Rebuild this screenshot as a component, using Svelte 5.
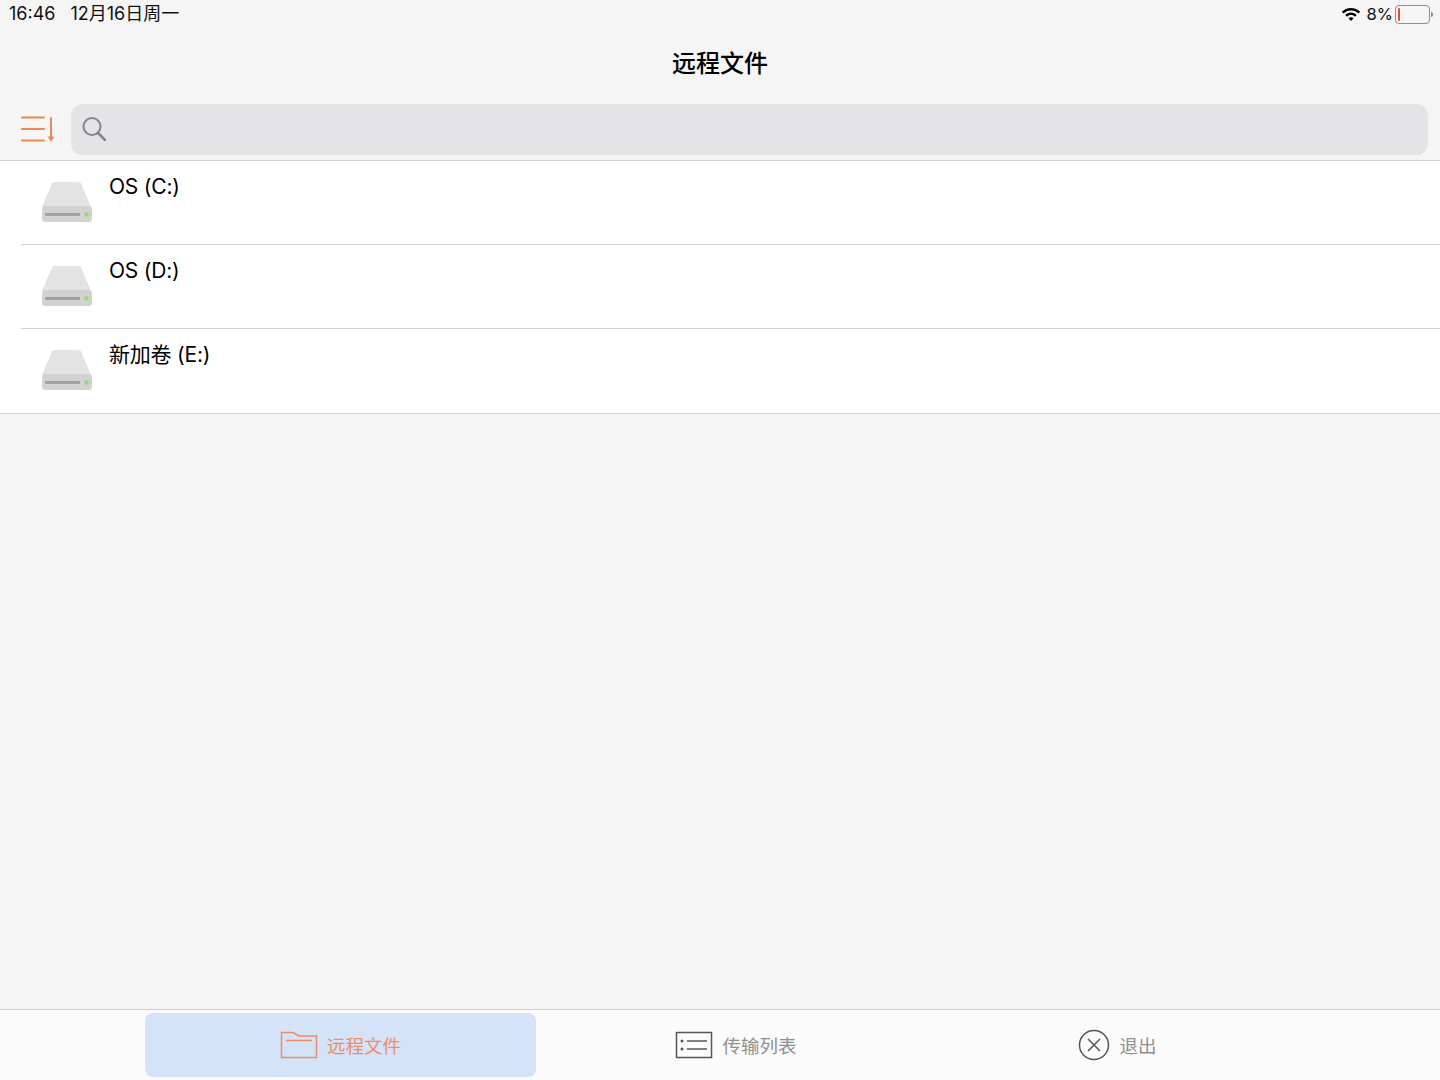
<script>
	const drives = ['OS (C:)', 'OS (D:)', '新加卷 (E:)'];
</script>

<div class="page">
	<header class="status-bar">
		<div class="status-left">
			<span>16:46</span>
			<span>12月16日周一</span>
		</div>
		<div class="status-right">
			<svg class="wifi" width="20" height="15" viewBox="0 0 20 15">
				<path d="M10 1C6.400 1 3.200 2.400.8 4.700l1.700 1.800C4.500 4.600 7.100 3.500 10 3.500s5.500 1.100 7.500 3l1.700-1.800C16.800 2.400 13.600 1 10 1z" />
				<path d="M10 5.600c-2.200 0-4.200.9-5.700 2.300l1.700 1.800C7 8.700 8.400 8.100 10 8.100s3 .6 4 1.600l1.700-1.800C14.200 6.500 12.200 5.600 10 5.600z" />
				<path d="M10 10.200c-1 0-1.900.4-2.500 1l2.500 2.700 2.500-2.700c-.6-.6-1.500-1-2.500-1z" />
			</svg>
			<span class="percent">8%</span>
			<div class="battery">
				<div class="battery-level"></div>
			</div>
			<div class="battery-cap"></div>
		</div>
	</header>

	<div class="title">远程文件</div>

	<div class="toolbar">
		<svg class="sort" width="36" height="26" viewBox="0 0 36 26" fill="none" stroke="#ea8a4e" stroke-width="2" stroke-linecap="round">
			<path d="M2 1.500h22M2 13h22M2 24.500h22M31 2v20" />
			<path d="M27.500 20.500h7l-3.500 5z" fill="#ea8a4e" stroke="none" />
		</svg>
		<div class="search">
			<svg width="24" height="24" viewBox="0 0 24 24" fill="none" stroke="#86868a" stroke-width="2">
				<circle cx="10" cy="9.500" r="8.500" />
				<path d="M16 16l7 7" stroke-width="2.600" stroke-linecap="round" />
			</svg>
		</div>
	</div>

	<ul class="list">
		{#each drives as drive}
			<li class="row">
				<svg class="drive" width="52" height="42" viewBox="0 0 52 42">
					<path d="M11 2.500Q11.500 1 13 1H38Q39.500 1 40 2.500L50 26H1z" fill="#e3e3e3" />
					<rect x="1" y="25" width="50" height="16" rx="3.500" fill="#d2d2d2" />
					<rect x="4" y="32" width="35" height="3" rx="1" fill="#a0a0a0" />
					<rect x="43.500" y="31.500" width="4" height="4" fill="#8ee06a" />
				</svg>
				<span class="name">{drive}</span>
			</li>
		{/each}
	</ul>

	<nav class="tabs">
		<div class="tab active">
			<svg width="38" height="28" viewBox="0 0 38 28" fill="none" stroke="#ea8f63" stroke-width="1.500">
				<path d="M1.500 1.500H13L19 5H36.500V26.500H1.500z" />
				<path d="M6 9.500H32" />
			</svg>
			<span>远程文件</span>
		</div>
		<div class="tab">
			<svg width="38" height="28" viewBox="0 0 38 28" fill="none" stroke="#555" stroke-width="1.500">
				<rect x="1.500" y="1.500" width="35" height="25" />
				<path d="M12 10H32M12 18H32" />
				<circle cx="7" cy="10" r="1.500" fill="#555" stroke="none" />
				<circle cx="7" cy="18" r="1.500" fill="#555" stroke="none" />
			</svg>
			<span>传输列表</span>
		</div>
		<div class="tab">
			<svg width="32" height="32" viewBox="0 0 32 32" fill="none" stroke="#555" stroke-width="1.500">
				<circle cx="16" cy="16" r="14.500" />
				<path d="M10 10L22 22M22 10L10 22" />
			</svg>
			<span>退出</span>
		</div>
	</nav>
</div>

<style>
	:global(body) {
		margin: 0;
		background: #f5f5f6;
	}

	.page {
		display: flex;
		flex-direction: column;
		height: 1080px;
		font-family: Inter, "Noto Sans CJK SC", sans-serif;
		color: #000;
		overflow: hidden;
	}

	.status-bar {
		display: flex;
		justify-content: space-between;
		align-items: center;
		height: 28px;
		padding: 0 7px 0 9px;
		font-size: 18px;
		line-height: 28px;
		color: #111;
	}

	.status-left {
		display: flex;
		align-items: baseline;
		gap: 15px;
	}

	.status-right {
		display: flex;
		align-items: center;
	}

	.percent {
		font-size: 16.500px;
	}

	.wifi {
		fill: #000;
		margin-right: 6px;
	}

	.battery {
		width: 29px;
		height: 13px;
		margin-left: 2px;
		padding: 2px;
		border: 1px solid #8e8e8e;
		border-radius: 4px;
		display: flex;
	}

	.battery-level {
		width: 2px;
		background: #e8453c;
		border-radius: 1px;
	}

	.battery-cap {
		width: 2px;
		height: 5px;
		margin-left: 1px;
		background: #8e8e8e;
		border-radius: 0 2px 2px 0;
	}

	.title {
		height: 71px;
		line-height: 71px;
		text-align: center;
		font-size: 24px;
		font-weight: 500;
	}

	.toolbar {
		display: flex;
		align-items: center;
		gap: 14.500px;
		height: 62px;
		padding: 5px 12px 5px 20px;
		border-bottom: 1px solid #d3d3d5;
		box-sizing: border-box;
	}

	.sort {
		flex: none;
		margin-bottom: 2px;
	}

	.search {
		flex: 1;
		display: flex;
		align-items: center;
		height: 51px;
		padding-left: 11px;
		background: #e4e4e7;
		border-radius: 12px;
	}

	.search svg {
		margin-bottom: 2px;
	}

	.list {
		margin: 0;
		padding: 0 0 0 21px;
		list-style: none;
		background: #fff;
		border-bottom: 1px solid #d3d3d5;
	}

	.row {
		display: flex;
		align-items: flex-start;
		height: 83px;
		padding-left: 20px;
		border-bottom: 1px solid #d3d3d5;
	}

	.row:last-child {
		border-bottom: 0;
		height: 84px;
	}

	.drive {
		margin-top: 20px;
		flex: none;
	}

	.name {
		margin: 13px 0 0 16px;
		font-size: 21px;
		line-height: 26px;
		letter-spacing: -0.2px;
	}

	.tabs {
		display: grid;
		grid-template-columns: 391px 400px 363px;
		height: 71px;
		margin-top: auto;
		padding: 3px 0 3px 145px;
		box-sizing: border-box;
		background: #fbfbfb;
		border-top: 1px solid #cfcfd1;
	}

	.tab {
		display: flex;
		align-items: center;
		justify-content: center;
		gap: 9px;
		font-size: 18.500px;
		color: #8f8f8f;
		border-radius: 8px;
	}

	.tab.active {
		background: #d4e3f8;
		color: #ea8f63;
	}
</style>
